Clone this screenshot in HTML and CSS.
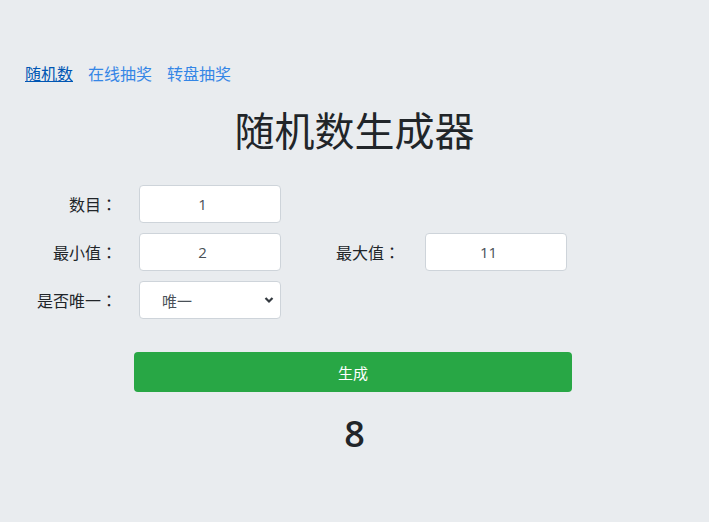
FILE: index.html
```html
<!DOCTYPE html>
<html lang="zh-CN">
<head>
<meta charset="utf-8">
<title>随机数生成器</title>
<link rel="stylesheet" href="styles.css">
</head>
<body>
<nav class="nav">
  <a class="nav-link active" href="#">随机数</a>
  <a class="nav-link" href="#">在线抽奖</a>
  <a class="nav-link" href="#">转盘抽奖</a>
</nav>
<h1 class="title">随机数生成器</h1>
<form class="form">
  <div class="row">
    <label class="label l1">数目<span class="colon" lang="ja">：</span></label>
    <input class="field" type="number" value="1">
  </div>
  <div class="row">
    <label class="label l1">最小值<span class="colon" lang="ja">：</span></label>
    <input class="field" type="number" value="2">
    <label class="label l2">最大值<span class="colon" lang="ja">：</span></label>
    <input class="field" type="number" value="11">
  </div>
  <div class="row">
    <label class="label l1">是否唯一<span class="colon" lang="ja">：</span></label>
    <select class="field select"><option>唯一</option><option>不唯一</option></select>
  </div>
  <div class="btn-row">
    <button class="btn" type="button">生成</button>
  </div>
</form>
<div class="result">8</div>
</body>
</html>
```
FILE: styles.css
```css
html, body {
  margin: 0;
  padding: 0;
}
body {
  background: #e9ecef;
  font-family: "Open Sans", "Noto Sans CJK SC", sans-serif;
  color: #212529;
  font-size: 16px;
}
.nav {
  display: flex;
  gap: 15px;
  padding: 61px 0 0 25px;
  line-height: 24px;
}
.nav-link {
  font-family: "Noto Sans CJK SC", sans-serif;
  color: #3486e6;
  text-decoration: none;
  font-size: 16px;
}
.nav-link.active {
  color: #0056b3;
  text-decoration: underline;
}
.title {
  margin: 17px 0 0;
  text-align: center;
  font-family: "Noto Sans CJK SC", sans-serif;
  font-weight: 400;
  font-size: 40px;
  line-height: 54px;
  color: #212529;
}
.form {
  margin-top: 29px;
}
.row {
  display: flex;
  align-items: center;
  height: 38px;
  margin-bottom: 10px;
}
.label {
  font-family: "Noto Sans CJK SC", sans-serif;
  font-size: 16px;
  text-align: right;
  color: #212529;
  box-sizing: border-box;
  white-space: nowrap;
}
.colon {
  font-family: "Noto Sans CJK JP", sans-serif;
}
.l1 {
  width: 117px;
  margin-right: 22px;
}
.l2 {
  width: 119px;
  margin-right: 25px;
}
.field {
  box-sizing: border-box;
  width: 142px;
  height: 38px;
  border: 1px solid #ced4da;
  border-radius: 4px;
  background: #fff;
  color: #495057;
  font-family: "Open Sans", "Noto Sans CJK SC", sans-serif;
  font-size: 15px;
  text-align: center;
  padding: 0 12px;
}
.select {
  text-align: left;
  padding-left: 22px;
  font-family: "Noto Sans CJK SC", sans-serif;
  appearance: none;
  background-image: url("data:image/svg+xml;utf8,<svg xmlns='http://www.w3.org/2000/svg' width='10' height='8' viewBox='0 0 10 8'><path d='M1.5 2l3.5 3.5 3.5-3.5' fill='none' stroke='%23343a40' stroke-width='2.2'/></svg>");
  background-repeat: no-repeat;
  background-position: right 6px center;
  background-size: 10px 8px;
}
.btn-row {
  margin-top: 33px;
  padding-left: 134px;
}
.btn {
  display: block;
  width: 438px;
  height: 40px;
  border: none;
  border-radius: 4px;
  background: #28a745;
  color: #fff;
  font-family: "Noto Sans CJK SC", sans-serif;
  font-size: 15px;
}
.result {
  margin-top: 18px;
  text-align: center;
  font-family: "Open Sans", sans-serif;
  font-weight: 600;
  font-size: 36px;
  line-height: 48px;
  color: #212529;
}
```
